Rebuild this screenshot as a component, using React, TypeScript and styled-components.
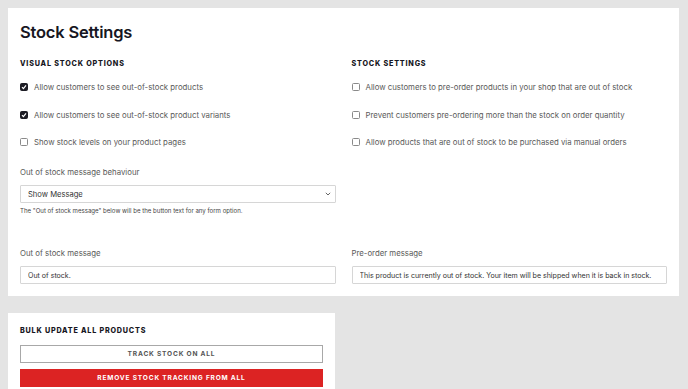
import styled, { createGlobalStyle } from "styled-components";

const GlobalStyle = createGlobalStyle`
  body {
    margin: 0;
    background: #e4e4e4;
    font-family: Inter, "Noto Sans", sans-serif;
    color: #555;
  }
`;

const visualOptions = [
  { label: "Allow customers to see out-of-stock products", checked: true },
  { label: "Allow customers to see out-of-stock product variants", checked: true },
  { label: "Show stock levels on your product pages", checked: false },
];

const stockOptions = [
  { label: "Allow customers to pre-order products in your shop that are out of stock", checked: false },
  { label: "Prevent customers pre-ordering more than the stock on order quantity", checked: false },
  { label: "Allow products that are out of stock to be purchased via manual orders", checked: false },
];

const CheckRow = ({ label, checked }: { label: string; checked: boolean }) => (
  <Row>
    <Box $checked={checked}>
      {checked && (
        <svg width="6" height="6" viewBox="0 0 6 6">
          <path d="M1 3.2 L2.4 4.6 L5 1.4" stroke="#fff" strokeWidth="1.2" fill="none" />
        </svg>
      )}
    </Box>
    <span>{label}</span>
  </Row>
);

const App = () => {
  return (
    <Page>
      <GlobalStyle />
      <Card>
        <Title>Stock Settings</Title>
        <Grid>
          <Column>
            <Heading>Visual Stock Options</Heading>
            <Options>
              {visualOptions.map((o) => (
                <CheckRow key={o.label} {...o} />
              ))}
            </Options>
            <Field $top={18}>
              <Label>Out of stock message behaviour</Label>
              <SelectWrap>
                <Select defaultValue="show">
                  <option value="show">Show Message</option>
                </Select>
                <Chevron width="6" height="4" viewBox="0 0 6 4">
                  <path d="M0.8 0.8 L3 3 L5.2 0.8" stroke="#666" strokeWidth="1" fill="none" />
                </Chevron>
              </SelectWrap>
              <Help>The "Out of stock message" below will be the button text for any form option.</Help>
            </Field>
          </Column>
          <Column>
            <Heading>Stock Settings</Heading>
            <Options>
              {stockOptions.map((o) => (
                <CheckRow key={o.label} {...o} />
              ))}
            </Options>
          </Column>
          <Field>
            <Label>Out of stock message</Label>
            <Input defaultValue="Out of stock." />
          </Field>
          <Field>
            <Label>Pre-order message</Label>
            <Input defaultValue="This product is currently out of stock. Your item will be shipped when it is back in stock." />
          </Field>
        </Grid>
      </Card>
      <BulkCard>
        <Heading>Bulk Update All Products</Heading>
        <Buttons>
          <Button>Track stock on all</Button>
          <Button $danger>Remove stock tracking from all</Button>
        </Buttons>
      </BulkCard>
    </Page>
  );
};

export default App;

const Page = styled.div`
  padding: 8px;
  display: flex;
  flex-direction: column;
  gap: 17px;
  width: 671px;
`;

const Card = styled.div`
  background: #fff;
  padding: 12px 12px 12px;
  display: flex;
  flex-direction: column;
`;

const Title = styled.h1`
  margin: 0;
  font-size: 16.5px;
  line-height: 24px;
  font-weight: 600;
  color: #161622;
  letter-spacing: -0.2px;
`;

const Grid = styled.div`
  margin-top: 14px;
  display: grid;
  grid-template-columns: 1fr 1fr;
  column-gap: 16px;
  row-gap: 31px;
`;

const Column = styled.div`
  display: flex;
  flex-direction: column;
`;

const Heading = styled.h2`
  margin: 0;
  font-size: 7.2px;
  line-height: 12px;
  font-weight: 800;
  letter-spacing: 0.8px;
  text-transform: uppercase;
  color: #161622;
`;

const Options = styled.div`
  margin-top: 11px;
  display: flex;
  flex-direction: column;
  gap: 15.5px;
`;

const Row = styled.label`
  display: flex;
  align-items: center;
  gap: 6px;
  font-size: 7.8px;
  line-height: 12px;
  color: #5a5a5a;
`;

const Box = styled.span<{ $checked: boolean }>`
  box-sizing: border-box;
  width: 8px;
  height: 8px;
  border-radius: 1.5px;
  display: flex;
  align-items: center;
  justify-content: center;
  background: ${(p) => (p.$checked ? "#1c1c24" : "#fff")};
  border: 1px solid ${(p) => (p.$checked ? "#1c1c24" : "#8a8a8a")};
`;

const Field = styled.div<{ $top?: number }>`
  margin-top: ${(p) => p.$top ?? 0}px;
  display: flex;
  flex-direction: column;
`;

const Label = styled.div`
  font-size: 7.8px;
  line-height: 12px;
  color: #5a5a5a;
  margin-bottom: 7px;
`;

const SelectWrap = styled.div`
  position: relative;
  display: flex;
`;

const Select = styled.select`
  appearance: none;
  margin: 0;
  width: 100%;
  height: 18px;
  box-sizing: border-box;
  border: 1px solid #d6d6d6;
  border-radius: 1px;
  background: #fff;
  padding: 0 7px;
  font-family: inherit;
  font-size: 7.6px;
  color: #333;
  outline: none;
`;

const Chevron = styled.svg`
  position: absolute;
  right: 5px;
  top: 7px;
  pointer-events: none;
`;

const Help = styled.div`
  margin-top: 3px;
  font-size: 6.1px;
  line-height: 10px;
  color: #444;
`;

const Input = styled.input`
  margin: 0;
  width: 100%;
  height: 18px;
  box-sizing: border-box;
  border: 1px solid #d6d6d6;
  border-radius: 1px;
  padding: 0 7px;
  font-family: inherit;
  font-size: 7.05px;
  color: #333;
  outline: none;
`;

const BulkCard = styled.div`
  background: #fff;
  width: 303px;
  padding: 12px 12px 14px;
  display: flex;
  flex-direction: column;
`;

const Buttons = styled.div`
  margin-top: 8px;
  display: flex;
  flex-direction: column;
  gap: 6px;
`;

const Button = styled.button<{ $danger?: boolean }>`
  margin: 0;
  height: 18px;
  width: 100%;
  border: 1px solid ${(p) => (p.$danger ? "#dc2323" : "#a8a8a8")};
  background: ${(p) => (p.$danger ? "#dc2323" : "#fff")};
  color: ${(p) => (p.$danger ? "#fff" : "#555")};
  font-family: inherit;
  font-size: 6.6px;
  font-weight: 700;
  letter-spacing: 0.8px;
  text-transform: uppercase;
  padding: 0;
`;
